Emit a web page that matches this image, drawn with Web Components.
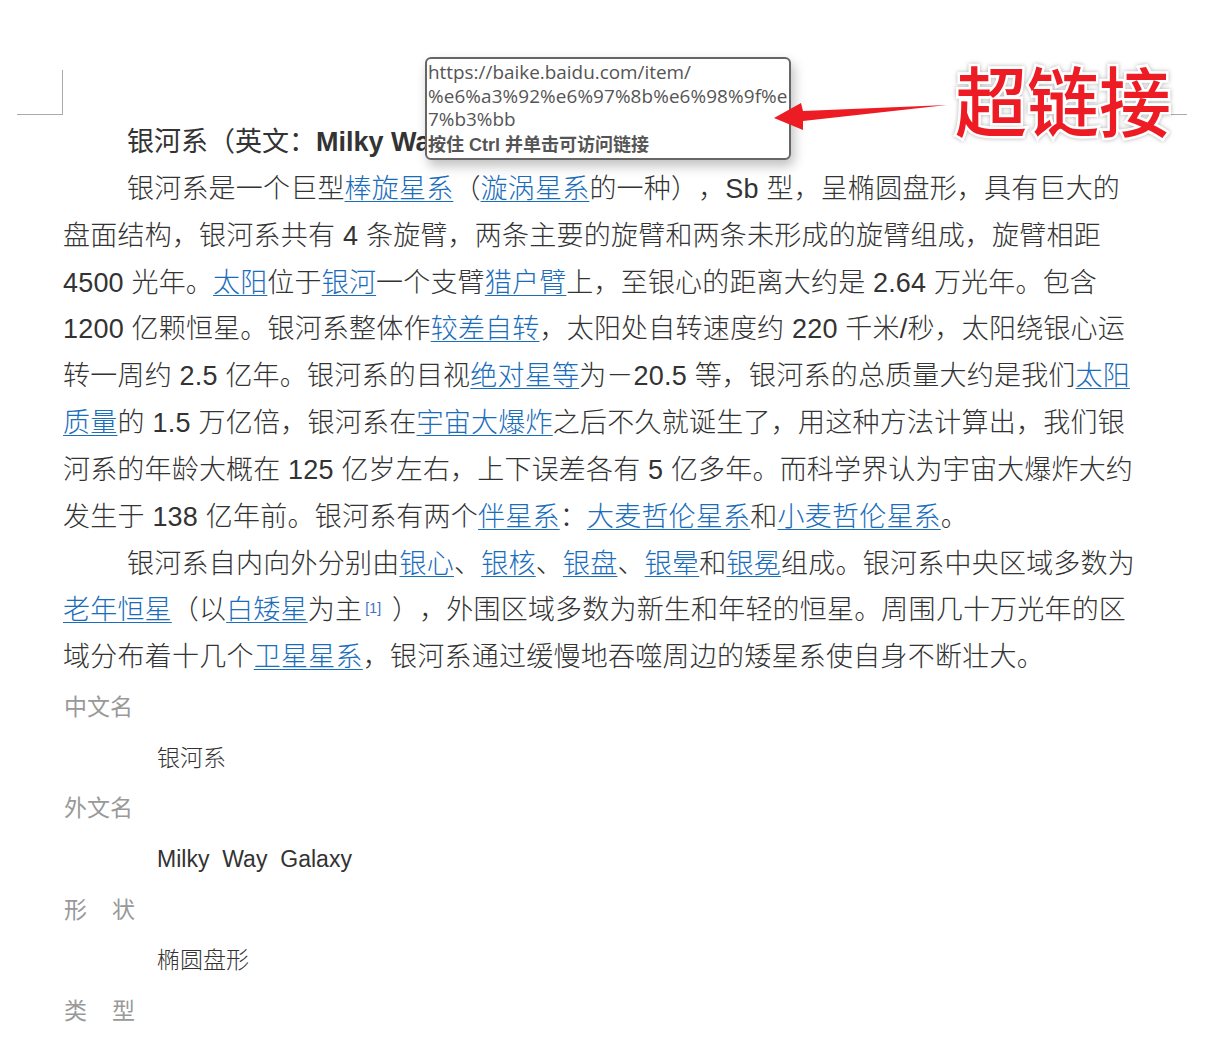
<!DOCTYPE html>
<html lang="zh">
<head>
<meta charset="utf-8">
<title>银河系</title>
<style>
    html, body { margin: 0; background: #fff; }
</style>
</head>
<body>
<word-page>
    <doc-line strong indent>银河系（英文：<b>Milky Way</b>）</doc-line>
    <doc-line end="1120" indent>银河系是一个巨型<doc-link>棒旋星系</doc-link>（<doc-link>漩涡星系</doc-link>的一种），Sb 型，呈椭圆盘形，具有巨大的</doc-line>
    <doc-line end="1101">盘面结构，银河系共有 4 条旋臂，两条主要的旋臂和两条未形成的旋臂组成，旋臂相距</doc-line>
    <doc-line end="1097">4500 光年。<doc-link>太阳</doc-link>位于<doc-link>银河</doc-link>一个支臂<doc-link>猎户臂</doc-link>上，至银心的距离大约是 2.64 万光年。包含</doc-line>
    <doc-line end="1125">1200 亿颗恒星。银河系整体作<doc-link>较差自转</doc-link>，太阳处自转速度约 220 千米/秒，太阳绕银心运</doc-line>
    <doc-line end="1130">转一周约 2.5 亿年。银河系的目视<doc-link>绝对星等</doc-link>为－20.5 等，银河系的总质量大约是我们<doc-link>太阳</doc-link></doc-line>
    <doc-line end="1125"><doc-link>质量</doc-link>的 1.5 万亿倍，银河系在<doc-link>宇宙大爆炸</doc-link>之后不久就诞生了，用这种方法计算出，我们银</doc-line>
    <doc-line end="1133">河系的年龄大概在 125 亿岁左右，上下误差各有 5 亿多年。而科学界认为宇宙大爆炸大约</doc-line>
    <doc-line end="968">发生于 138 亿年前。银河系有两个<doc-link>伴星系</doc-link>：<doc-link>大麦哲伦星系</doc-link>和<doc-link>小麦哲伦星系</doc-link>。</doc-line>
    <doc-line end="1135" indent>银河系自内向外分别由<doc-link>银心</doc-link>、<doc-link>银核</doc-link>、<doc-link>银盘</doc-link>、<doc-link>银晕</doc-link>和<doc-link>银冕</doc-link>组成。银河系中央区域多数为</doc-line>
    <doc-line end="1126"><doc-link>老年恒星</doc-link>（以<doc-link>白矮星</doc-link>为主<doc-ref>[1]</doc-ref> ），外围区域多数为新生和年轻的恒星。周围几十万光年的区</doc-line>
    <doc-line end="1044">域分布着十几个<doc-link>卫星星系</doc-link>，银河系通过缓慢地吞噬周边的矮星系使自身不断壮大。</doc-line>
    <info-field style="margin-top:1px" label="中文名">银河系</info-field>
    <info-field label="外文名"><span style="word-spacing:6.5px">Milky Way Galaxy</span></info-field>
    <info-field label="形　状" wide>椭圆盘形</info-field>
    <info-field label="类　型" wide></info-field>
    <link-tooltip slot="over" url="https://baike.baidu.com/item/%e6%a3%92%e6%97%8b%e6%98%9f%e7%b3%bb" hint="按住 Ctrl 并单击可访问链接"></link-tooltip>
    <red-callout slot="over">超链接</red-callout>
</word-page>

<script>
const CJK = '"Liberation Sans", "Noto Sans CJK SC", sans-serif';

class WordPage extends HTMLElement {
    constructor()
    {
        super();
        this.attachShadow({mode: "open"});
        this.shadowRoot.innerHTML = `
            <style>
                :host {
                    display: block;
                    position: relative;
                    width: 1230px;
                    height: 1037px;
                    overflow: hidden;
                    box-sizing: border-box;
                    padding: 119px 0 0 63px;
                    background: #fff;
                    font: 300 27px/46.85px ${CJK};
                    color: #333;
                    text-spacing-trim: space-all;
                    text-autospace: no-autospace;
                }
                .mark { position: absolute; border: 0 solid #aaa; }
                .left { left: 17px; top: 70px; width: 45px; height: 44px; border-right-width: 1px; border-bottom-width: 1px; }
                .right { left: 1137px; top: 114px; width: 50px; height: 0; border-top-width: 1px; }
            </style>
            <div class="mark left"></div>
            <div class="mark right"></div>
            <slot></slot>
            <slot name="over"></slot>
        `;
    }
}

class DocLine extends HTMLElement {
    constructor()
    {
        super();
        this.attachShadow({mode: "open"});
        this.shadowRoot.innerHTML = `
            <style>
                :host {
                    display: block;
                    height: 46.85px;
                    white-space: nowrap;
                }
                :host([indent]) { padding-left: 64px; }
                :host([strong]) { font-weight: 400; }
            </style>
            <slot></slot>
        `;
    }

    connectedCallback()
    {
        if (!this.hasAttribute("end"))
            return;

        // stretch the line so that it stops where the reference line stops
        let range = document.createRange();
        range.selectNodeContents(this);
        let box = range.getBoundingClientRect();
        let extra = this.getAttribute("end") - box.right;
        this.style.letterSpacing = (extra / this.textContent.length) + "px";
    }
}

// inline elements: no whitespace beside the slot, it would show up as a space
class DocLink extends HTMLElement {
    constructor()
    {
        super();
        this.attachShadow({mode: "open"});
        this.shadowRoot.innerHTML = `<style>
                :host {
                    display: inline;
                    color: #1a6dbb;
                    text-decoration: underline;
                    text-decoration-thickness: 1px;
                    text-underline-offset: 3px;
                }
            </style><slot></slot>`;
    }
}

class DocRef extends HTMLElement {
    constructor()
    {
        super();
        this.attachShadow({mode: "open"});
        this.shadowRoot.innerHTML = `<style>
                :host { display: inline; padding: 0 3px; color: #3b6fc6; font-size: 14px; font-weight: 400; vertical-align: 6px; line-height: 0; }
            </style><slot></slot>`;
    }
}

class InfoField extends HTMLElement {
    constructor()
    {
        super();
        this.attachShadow({mode: "open"});
        this.shadowRoot.innerHTML = `
            <style>
                :host {
                    display: block;
                    margin-left: 1px;
                    font-size: 23px;
                    line-height: 50.6px;
                    font-weight: 400;
                }
                .label { color: #999; font-weight: 400; }
                :host([wide]) .label { word-spacing: 2px; letter-spacing: 1px; }
                .value { padding-left: 93px; color: #333; font-weight: 300; }
            </style>
            <div class="label"></div>
            <div class="value"><slot></slot></div>
        `;
        this.labelEl = this.shadowRoot.querySelector(".label");
    }

    connectedCallback()
    {
        this.labelEl.textContent = this.getAttribute("label");
    }
}

class LinkTooltip extends HTMLElement {
    constructor()
    {
        super();
        this.attachShadow({mode: "open"});
        this.shadowRoot.innerHTML = `
            <style>
                :host {
                    position: absolute;
                    left: 425px;
                    top: 57px;
                    width: 366px;
                    height: 103px;
                    box-sizing: border-box;
                    padding: 2px 0 0 1px;
                    background: #fff;
                    border: 2px solid #666;
                    border-radius: 6px;
                    box-shadow: 3px 6px 12px rgba(0, 0, 0, .25);
                    font: 400 18.9px/23.6px "Open Sans", "Noto Sans CJK SC", sans-serif;
                    color: #555;
                    overflow: hidden;
                }
                .wide { letter-spacing: .1px; white-space: nowrap; }
                .hint { margin-top: 2px; font: 700 18px/23.6px ${CJK}; }
            </style>
            <div class="first"></div>
            <div class="wide"></div>
            <div class="last"></div>
            <div class="hint"></div>
        `;
    }

    connectedCallback()
    {
        let url = this.getAttribute("url");
        this.shadowRoot.querySelector(".first").textContent = url.slice(0, 29);
        this.shadowRoot.querySelector(".wide").textContent = url.slice(29, 58);
        this.shadowRoot.querySelector(".last").textContent = url.slice(58);
        this.shadowRoot.querySelector(".hint").textContent = this.getAttribute("hint");
    }
}

class RedCallout extends HTMLElement {
    constructor()
    {
        super();
        this.attachShadow({mode: "open"});
        this.shadowRoot.innerHTML = `
            <style>
                :host {
                    position: absolute;
                    left: 772px;
                    top: 60px;
                    width: 420px;
                    height: 90px;
                    display: block;
                }
                svg { position: absolute; left: 0; top: 0; }
                .text {
                    position: absolute;
                    left: 183px;
                    top: 0;
                    font: 500 72px/84px ${CJK};
                    color: #ed1c24;
                    white-space: nowrap;
                    -webkit-text-stroke: 5px #fff;
                    paint-order: stroke fill;
                    filter: drop-shadow(0 0 2px rgba(0, 0, 0, .3));
                    transform: scaleY(1.06);
                    transform-origin: 50% 0;
                }
            </style>
            <svg width="180" height="90" viewBox="0 0 180 90">
                <path d="M2 58 L29 43 L31 51 L175 45 L31 61 L31 70 Z" fill="#ed1c24"/>
            </svg>
            <div class="text"><slot></slot></div>
        `;
    }
}

customElements.define("word-page", WordPage);
customElements.define("doc-link", DocLink);
customElements.define("doc-ref", DocRef);
customElements.define("info-field", InfoField);
customElements.define("link-tooltip", LinkTooltip);
customElements.define("red-callout", RedCallout);
customElements.define("doc-line", DocLine);
</script>
</body>
</html>
